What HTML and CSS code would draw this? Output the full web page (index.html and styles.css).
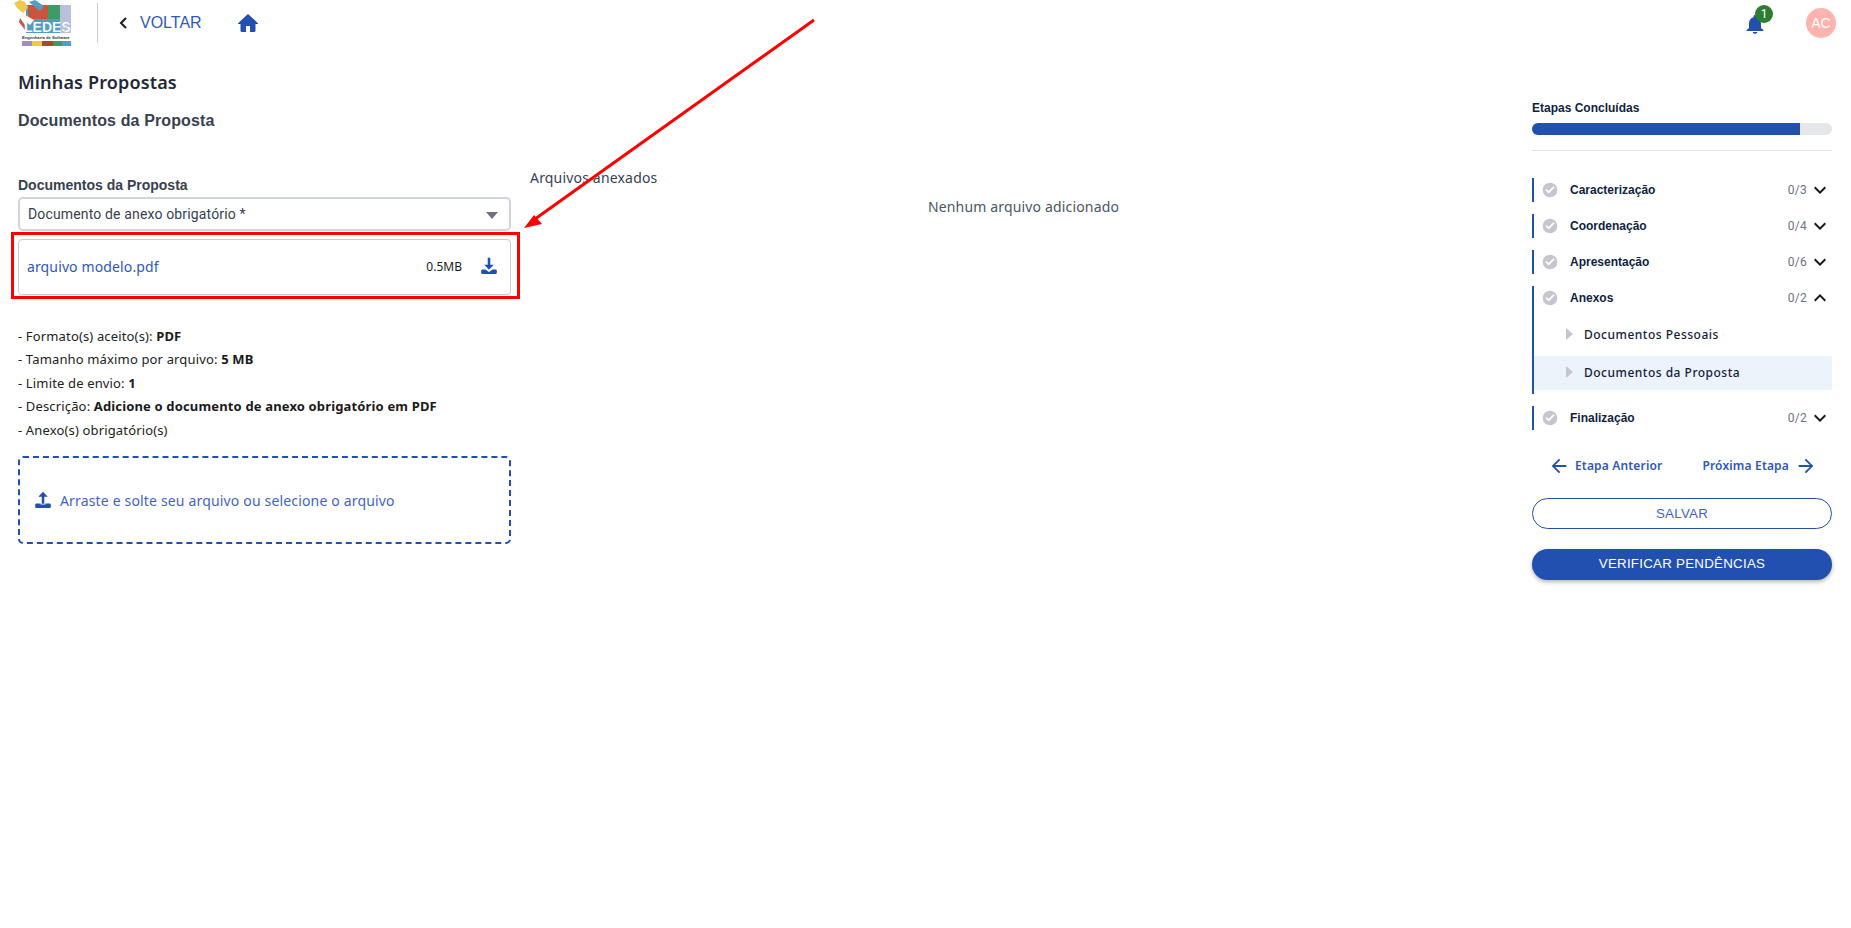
FILE: index.html
```html
<!DOCTYPE html>
<html lang="pt-BR">
<head>
<meta charset="utf-8">
<title>Minhas Propostas</title>
<link rel="stylesheet" href="styles.css">
</head>
<body>
<svg class="sprite" width="0" height="0" aria-hidden="true">
  <symbol id="i-check" viewBox="0 0 24 24"><path d="M12 1a11 11 0 1 0 0 22 11 11 0 0 0 0-22zm-2 16.4-5-5 1.9-1.9 3.1 3.1 7.1-7.1L19 8.4z"/></symbol>
  <symbol id="i-more" viewBox="0 0 24 24"><path d="M16.59 8.59L12 13.17 7.41 8.59 6 10l6 6 6-6z"/></symbol>
  <symbol id="i-less" viewBox="0 0 24 24"><path d="M12 8l-6 6 1.41 1.41L12 10.83l4.59 4.58L18 14z"/></symbol>
  <symbol id="i-left" viewBox="0 0 24 24"><path d="M20 11H7.83l5.59-5.59L12 4l-8 8 8 8 1.41-1.41L7.83 13H20v-2z"/></symbol>
  <symbol id="i-right" viewBox="0 0 24 24"><path d="M4 11h12.17l-5.59-5.59L12 4l8 8-8 8-1.41-1.41L16.17 13H4v-2z"/></symbol>
  <symbol id="i-tray-down" viewBox="0 0 24 24"><path d="M10.3 1h3.4v9.2h4.6L12 17 5.700 10.200h4.600z"/><path d="M3.500 16.500h3.700L12 20l4.800-3.500h3.700c1.200 0 2 .9 2 2.100v1.900c0 1.200-.8 2-2 2h-17c-1.200 0-2-.8-2-2v-1.900c0-1.200.8-2.100 2-2.100z"/></symbol>
  <symbol id="i-tray-up" viewBox="0 0 24 24"><path d="M12 1l6.300 6.800h-4.600V17h-3.400V7.800H5.700z"/><path d="M3.500 16.500h5.300v1.500h6.400v-1.500h5.300c1.200 0 2 .9 2 2.100v1.900c0 1.200-.8 2-2 2h-17c-1.200 0-2-.8-2-2v-1.900c0-1.200.8-2.100 2-2.100z"/></symbol>
</svg>

<header class="topbar">
  <div class="brand">
    <svg class="logo" viewBox="0 0 57 46" role="img" aria-label="LEDES">
      <rect x="12" y="5" width="45" height="28" fill="#4f9fc4"/>
      <rect x="14" y="5" width="20" height="14" fill="#c9563b"/>
      <rect x="34" y="5" width="12" height="14" fill="#3f9a63"/>
      <rect x="46" y="5" width="11" height="28" fill="#b7c0dd"/>
      <polygon points="0,3 6,0 11,2 14,8 9,13 3,8" fill="#f0c84a"/>
      <polygon points="15,2 21,0 30,6 26,11" fill="#4f9fc4"/>
      <polygon points="6,12 20,20 16,25 4,16" fill="#fff"/>
      <polygon points="6,18 13,28 11,30 5,22" fill="#c9563b"/>
      <text class="logo-word" x="10" y="32">LEDES</text>
      <text class="logo-sub" x="8" y="39">Engenharia de Software</text>
      <rect x="8" y="41" width="10" height="5" fill="#9d8dc2"/>
      <rect x="18" y="41" width="10" height="5" fill="#f0c84a"/>
      <rect x="28" y="41" width="11" height="5" fill="#a8492c"/>
      <rect x="39" y="41" width="9" height="5" fill="#3f9a63"/>
      <rect x="48" y="41" width="9" height="5" fill="#4f9fc4"/>
    </svg>
    <span class="divider"></span>
    <a class="back">
      <svg class="back-icon" viewBox="0 0 8 12"><path d="M7 1 2 6l5 5" fill="none" stroke="#1c1c1c" stroke-width="2"/></svg>
      <span>VOLTAR</span>
    </a>
    <svg class="home" viewBox="0 0 20 18"><path d="M10 0 0 9.200c-.3.400 0 .8.400.8H2.500v6.800c0 .7.500 1.200 1.200 1.200H8v-6h4v6h4.300c.7 0 1.200-.5 1.200-1.200V10h2.100c.4 0 .7-.4.400-.8z"/></svg>
  </div>
  <div class="user-area">
    <div class="bell">
      <svg class="bell-icon" viewBox="0 0 20 20"><path d="M10 1c-.8 0-1.400.6-1.400 1.400v.8C5.700 3.900 4 6.300 4 9.200V14l-2.500 2.200v.8h17v-.8L16 14V9.200c0-2.900-1.700-5.300-4.600-6V2.400C11.400 1.600 10.800 1 10 1z"/><path d="M7.800 18h4.400c0 1-1 1.800-2.200 1.800S7.800 19 7.800 18z"/></svg>
      <span class="badge">1</span>
    </div>
    <span class="avatar">AC</span>
  </div>
</header>

<main class="page">
  <section class="form-col">
    <h1 class="page-title">Minhas Propostas</h1>
    <h2 class="section-title">Documentos da Proposta</h2>
    <label class="field-label">Documentos da Proposta</label>
    <div class="select">
      <span>Documento de anexo obrigatório *</span>
      <i class="caret"></i>
    </div>
    <div class="file-card">
      <a class="file-name">arquivo modelo.pdf</a>
      <span class="file-size">0.5MB</span>
      <svg class="file-dl"><use href="#i-tray-down"/></svg>
    </div>
    <ul class="rules">
      <li>- Formato(s) aceito(s): <b>PDF</b></li>
      <li>- Tamanho máximo por arquivo: <b>5 MB</b></li>
      <li>- Limite de envio: <b>1</b></li>
      <li>- Descrição: <b>Adicione o documento de anexo obrigatório em PDF</b></li>
      <li>- Anexo(s) obrigatório(s)</li>
    </ul>
    <div class="dropzone">
      <svg class="drop-icon"><use href="#i-tray-up"/></svg>
      <span>Arraste e solte seu arquivo ou selecione o arquivo</span>
    </div>
  </section>

  <section class="files-col">
    <h3 class="files-title">Arquivos anexados</h3>
    <p class="files-empty">Nenhum arquivo adicionado</p>
  </section>

  <aside class="steps">
    <div class="steps-title">Etapas Concluídas</div>
    <div class="progress"><div class="progress-fill"></div></div>
    <hr class="steps-rule">
    <div class="step">
      <div class="step-head"><svg class="step-check"><use href="#i-check"/></svg><span class="step-name">Caracterização</span><span class="step-count">0/3</span><svg class="step-chev"><use href="#i-more"/></svg></div>
    </div>
    <div class="step">
      <div class="step-head"><svg class="step-check"><use href="#i-check"/></svg><span class="step-name">Coordenação</span><span class="step-count">0/4</span><svg class="step-chev"><use href="#i-more"/></svg></div>
    </div>
    <div class="step">
      <div class="step-head"><svg class="step-check"><use href="#i-check"/></svg><span class="step-name">Apresentação</span><span class="step-count">0/6</span><svg class="step-chev"><use href="#i-more"/></svg></div>
    </div>
    <div class="step step-open">
      <div class="step-head"><svg class="step-check"><use href="#i-check"/></svg><span class="step-name">Anexos</span><span class="step-count">0/2</span><svg class="step-chev"><use href="#i-less"/></svg></div>
      <div class="sub"><i class="sub-tri"></i>Documentos Pessoais</div>
      <div class="sub sub-active"><i class="sub-tri"></i>Documentos da Proposta</div>
    </div>
    <div class="step">
      <div class="step-head"><svg class="step-check"><use href="#i-check"/></svg><span class="step-name">Finalização</span><span class="step-count">0/2</span><svg class="step-chev"><use href="#i-more"/></svg></div>
    </div>
    <nav class="step-nav">
      <a class="nav-prev"><svg class="nav-icon"><use href="#i-left"/></svg>Etapa Anterior</a>
      <a class="nav-next">Próxima Etapa<svg class="nav-icon"><use href="#i-right"/></svg></a>
    </nav>
    <button class="btn btn-outline">SALVAR</button>
    <button class="btn btn-solid">VERIFICAR PENDÊNCIAS</button>
  </aside>
</main>

<div class="callout-box"></div>
<svg class="callout-arrow" viewBox="0 0 1851 928">
  <line x1="814" y1="20" x2="535" y2="219" stroke="#f00" stroke-width="3"/>
  <polygon points="524,228 534,215 542,224" fill="#f00"/>
</svg>
</body>
</html>
```

FILE: styles.css
```css
* { box-sizing: border-box; }
html, body { margin: 0; padding: 0; height: 100%; background: #fff; }
body { font-family: "Noto Sans", sans-serif; color: #1f2937; overflow: hidden; position: relative; }
.sprite { position: absolute; }
svg { display: block; }

.topbar { display: flex; justify-content: space-between; align-items: flex-start; height: 46px; padding-left: 14px; }
.brand { display: flex; align-items: flex-start; }
.logo { width: 57px; height: 46px; }
.logo-word { font: 700 14px "Liberation Sans", sans-serif; fill: #fff; stroke: #5a7fa0; stroke-width: .15px; }
.logo-sub { font: 700 4.200px "Liberation Sans", sans-serif; fill: #333; }
.divider { width: 1px; height: 40px; margin: 3px 0 0 26px; background: #cfcfcf; }
.back { display: flex; align-items: center; margin: 14px 0 0 21px; color: #2f58b8; font: 400 16px/16px "Liberation Sans", sans-serif; height: 17px; }
.back-icon { width: 8px; height: 12px; margin-right: 13px; }
.home { width: 20px; height: 18px; margin: 14px 0 0 36px; fill: #2150b0; }

.user-area { display: flex; align-items: flex-start; padding-right: 15px; }
.bell { position: relative; width: 20px; height: 20px; margin-top: 14px; }
.bell-icon { width: 20px; height: 20px; fill: #2150b0; }
.badge { position: absolute; left: 10px; top: -9px; width: 18px; height: 18px; border-radius: 50%; background: #2e7d32; color: #fff; font: 400 12px/18px "Roboto", sans-serif; text-align: center; }
.avatar { width: 30px; height: 30px; margin: 8px 0 0 41px; border-radius: 50%; background: #ffb3ae; color: #fff; font: 400 14px/30px "Liberation Sans", sans-serif; text-align: center; }

.page { display: flex; align-items: flex-start; padding: 0 19px 0 18px; }
.form-col { width: 493px; flex: none; }
.page-title { margin: 24px 0 0; font-size: 18px; line-height: 24px; font-weight: 600; letter-spacing: .15px; color: #1f2937; }
.section-title { margin: 15px 0 0; font: 700 16px/24px "Liberation Sans", sans-serif; letter-spacing: .12px; color: #374151; }
.field-label { display: block; margin-top: 42px; font: 700 14px/20px "Liberation Sans", sans-serif; color: #374151; }
.select { display: flex; justify-content: space-between; align-items: center; height: 34px; margin-top: 2px; padding: 0 11px 0 8px; border: 2px solid #d1d5db; border-radius: 5px; font: 400 14px/20px "Roboto", sans-serif; letter-spacing: .15px; color: #374151; }
.caret { width: 0; height: 0; border-left: 6px solid transparent; border-right: 6px solid transparent; border-top: 7px solid #6b7280; margin-top: 3px; }
.file-card { display: flex; align-items: center; height: 56px; margin-top: 8px; padding: 0 12px 2px 8px; border: 1px solid #c8cad6; border-radius: 4px; }
.file-name { flex: 1; font-size: 14px; letter-spacing: .13px; color: #2f58b8; }
.file-size { font-size: 12px; color: #1a1a1a; margin-right: 18px; }
.file-dl { width: 18px; height: 18px; fill: #2150b0; }
.rules { list-style: none; margin: 30px 0 0; padding: 0; font-size: 13px; line-height: 23.400px; letter-spacing: .15px; color: #222; }
.rules b { font-weight: 700; color: #1a1a1a; }
.dropzone { display: flex; align-items: center; height: 88px; margin-top: 14px; padding-left: 14px; border: 2px dashed #2150b0; border-radius: 5px; font-size: 14px; letter-spacing: .165px; color: #3f65c4; }
.drop-icon { width: 18px; height: 18px; margin-right: 8px; fill: #2150b0; }

.files-col { flex: 1; margin-left: 19px; padding-top: 121px; }
.files-title { margin: 0; font-size: 14px; line-height: 22px; font-weight: 400; letter-spacing: .18px; color: #374151; }
.files-empty { margin: 7px 0 0; text-align: center; font-size: 14px; line-height: 22px; letter-spacing: .16px; color: #4b5563; padding-right: 15px; }

.steps { width: 300px; flex: none; padding-top: 53px; }
.steps-title { font: 700 12px/18px "Liberation Sans", sans-serif; color: #0f1f3d; }
.progress { height: 12px; margin-top: 6px; border-radius: 6px; background: #e5e7eb; overflow: hidden; }
.progress-fill { width: 268px; height: 100%; background: #2150b0; }
.steps-rule { height: 1px; margin: 15px 0 27px; border: 0; background: #e2e4e8; }
.step { border-left: 2px solid #2150b0; margin-bottom: 12px; }
.step-head { display: flex; align-items: center; height: 24px; padding: 0 0 0 8px; }
.step-check { width: 16px; height: 16px; fill: #c5c6d0; flex: none; }
.step-name { flex: 1; margin-left: 12px; font: 700 12px/16px "Liberation Sans", sans-serif; color: #0f1f3d; }
.step-count { font: 400 12px/16px "Roboto", sans-serif; letter-spacing: .3px; color: #6b7280; margin-right: 1px; }
.step-chev { width: 24px; height: 24px; fill: #1a1a1a; flex: none; }
.step-open { margin-bottom: 12px; padding-bottom: 4px; }
.sub { display: flex; align-items: center; height: 34px; padding: 0 0 2px 32px; font-size: 12px; font-weight: 500; letter-spacing: .5px; color: #14213d; }
.sub:nth-child(2) { margin-top: 4px; height: 42px; }
.sub-active { background: #edf3fb; }
.sub-tri { width: 0; height: 0; margin-right: 11px; border-top: 6px solid transparent; border-bottom: 6px solid transparent; border-left: 7px solid #c5c6d0; }
.step-nav { display: flex; justify-content: space-between; padding: 13px 15px 0 16px; }
.step-nav a { display: flex; align-items: center; font-size: 12px; font-weight: 600; line-height: 22px; letter-spacing: .17px; color: #2f58b8; }
.nav-prev { gap: 5px; }
.nav-next { gap: 6px; }
.nav-icon { width: 22px; height: 22px; fill: #2150b0; }
.btn { display: block; width: 100%; border-radius: 16px; font: 400 13.330px/16px "Liberation Sans", sans-serif; letter-spacing: .25px; cursor: pointer; }
.btn-outline { height: 31px; margin-top: 21px; border: 1px solid #2150b0; background: #fff; color: #3f65c4; }
.btn-solid { height: 31px; margin-top: 20px; padding-bottom: 3px; border: 0; background: #2150b0; color: #fff; box-shadow: 0 2px 4px rgba(0,0,0,.3); }

.callout-box { position: absolute; left: 11px; top: 232px; width: 509px; height: 67px; border: 3px solid #f00; }
.callout-arrow { position: absolute; left: 0; top: 0; width: 1851px; height: 928px; pointer-events: none; }
```
